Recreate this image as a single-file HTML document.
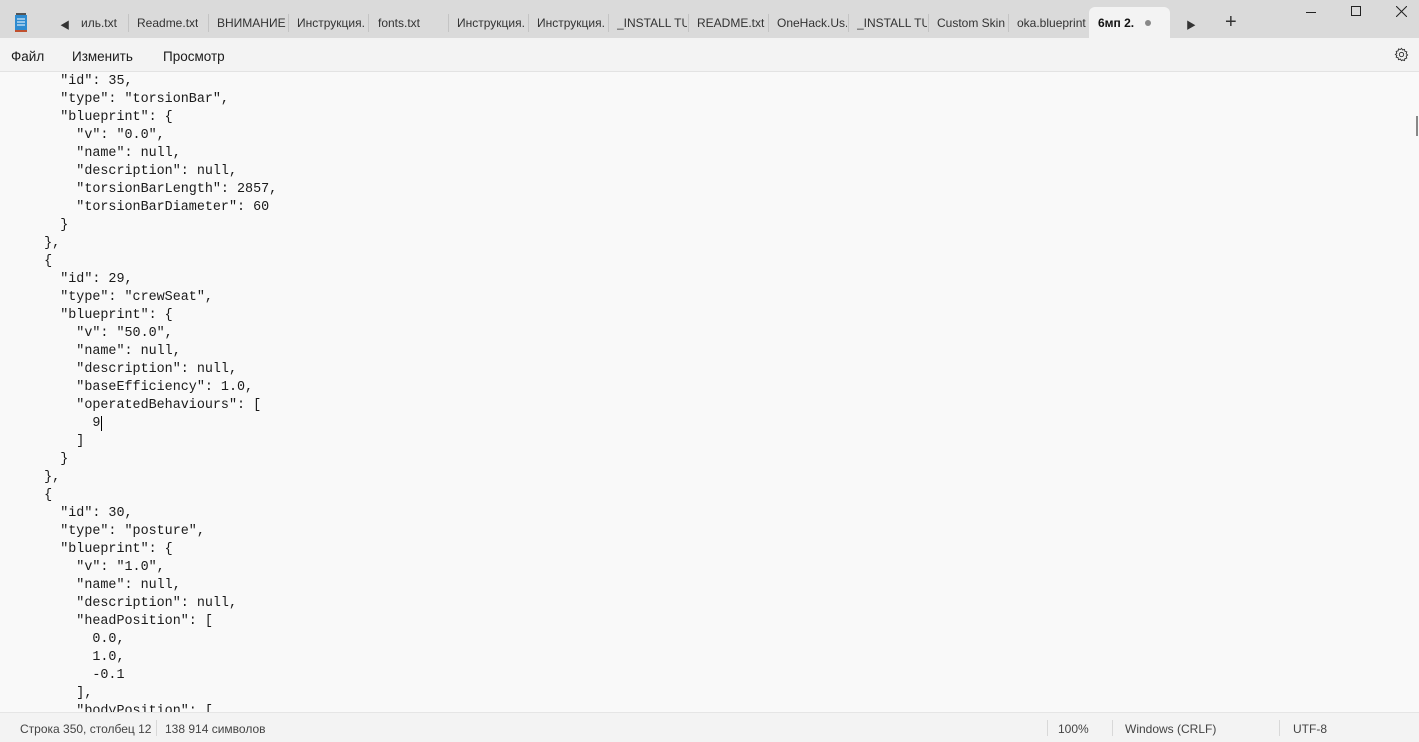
<!DOCTYPE html>
<html><head><meta charset="utf-8"><style>
*{margin:0;padding:0;box-sizing:border-box}
body{width:1419px;height:742px;overflow:hidden;background:#f9f9f9;font-family:"Liberation Sans","Noto Sans CJK SC",sans-serif;position:relative}
#tabs{position:absolute;left:0;top:0;width:1419px;height:38px;background:#dadada}
.tab{position:absolute;top:16px;font-size:12px;color:#333;white-space:nowrap;overflow:hidden}
.sep{position:absolute;top:14px;width:1px;height:18px;background:#c4c4c4}
#active{position:absolute;left:1089px;top:7px;width:81px;height:32px;background:#f3f3f3;border-radius:6px 6px 0 0}
#menu{position:absolute;left:0;top:38px;width:1419px;height:34px;background:#f3f3f3;border-bottom:1px solid #e3e3e3}
#menu span{position:absolute;top:11px;font-size:13.5px;color:#1a1a1a}
#ed{position:absolute;left:12px;top:73px;font-family:"Liberation Mono",monospace;font-size:13.4px;line-height:18px;color:#1a1a1a;white-space:pre}
#status{position:absolute;left:0;top:712px;width:1419px;height:30px;background:#f3f3f3;border-top:1px solid #e5e5e5;font-size:12px;color:#444}
#status span{position:absolute;top:9px}
#status i{position:absolute;top:7px;width:1px;height:16px;background:#d8d8d8}
</style></head><body>
<div id="tabs">
<svg style="position:absolute;left:14px;top:13px" width="14" height="19"><rect x="1" y="2" width="12" height="15" fill="#2e8bd0"/><rect x="1" y="17" width="12" height="2" fill="#c0502e"/><g stroke="#fff" stroke-width="1"><line x1="3" y1="6" x2="11" y2="6"/><line x1="3" y1="9" x2="11" y2="9"/><line x1="3" y1="12" x2="11" y2="12"/></g><rect x="2" y="0" width="10" height="2" fill="#555"/></svg>
<div class="tab" style="left:60px;top:17px;font-size:10px">◀</div>
<div class="tab" style="left:81px;width:45px">иль.txt</div><div class="sep" style="left:128px"></div>
<div class="tab" style="left:137px">Readme.txt</div><div class="sep" style="left:208px"></div>
<div class="tab" style="left:217px;width:70px">ВНИМАНИЕ</div><div class="sep" style="left:288px"></div>
<div class="tab" style="left:297px;width:70px">Инструкция.</div><div class="sep" style="left:368px"></div>
<div class="tab" style="left:378px">fonts.txt</div><div class="sep" style="left:448px"></div>
<div class="tab" style="left:457px;width:70px">Инструкция.</div><div class="sep" style="left:528px"></div>
<div class="tab" style="left:537px;width:70px">Инструкция.</div><div class="sep" style="left:608px"></div>
<div class="tab" style="left:617px;width:70px">_INSTALL TU</div><div class="sep" style="left:688px"></div>
<div class="tab" style="left:697px;width:70px">README.txt</div><div class="sep" style="left:768px"></div>
<div class="tab" style="left:777px;width:70px">OneHack.Us.</div><div class="sep" style="left:848px"></div>
<div class="tab" style="left:857px;width:70px">_INSTALL TU</div><div class="sep" style="left:928px"></div>
<div class="tab" style="left:937px;width:70px">Custom Skin</div><div class="sep" style="left:1008px"></div>
<div class="tab" style="left:1017px;width:70px">оkа.blueprint</div>
<div id="active"></div>
<div class="tab" style="left:1098px;font-weight:bold;color:#111">6мп 2.</div>
<div style="position:absolute;left:1145px;top:20px;width:6px;height:6px;border-radius:3px;background:#888"></div>
<div class="tab" style="left:1186px;top:17px;font-size:10px">▶</div>
<div class="tab" style="left:1225px;top:11px;font-size:20px;font-weight:300">+</div>
<div style="position:absolute;left:1306px;top:12px;width:10px;height:1px;background:#222"></div>
<div style="position:absolute;left:1351px;top:6px;width:10px;height:10px;border:1px solid #222"></div>
<svg style="position:absolute;left:1396px;top:6px" width="11" height="11"><path d="M0 0L11 11M11 0L0 11" stroke="#222" stroke-width="1"/></svg>
</div>
<div id="menu"><span style="left:11px">Файл</span><span style="left:72px">Изменить</span><span style="left:163px">Просмотр</span>
<svg style="position:absolute;left:1394px;top:9px" width="15" height="15" viewBox="0 0 16 16"><path d="M8 1.5l1.2 1.7 2-.6.4 2 2 .6-.6 2 1.5 1.3-1.5 1.3.6 2-2 .6-.4 2-2-.6L8 14.5l-1.2-1.6-2 .6-.4-2-2-.6.6-2L1.5 8l1.5-1.3-.6-2 2-.6.4-2 2 .6z" fill="none" stroke="#333"/><circle cx="8" cy="8" r="2.3" fill="none" stroke="#333"/></svg></div>
<div style="position:absolute;left:1416px;top:116px;width:2px;height:20px;background:#888"></div>
<div id="ed">      "id": 35,
      "type": "torsionBar",
      "blueprint": {
        "v": "0.0",
        "name": null,
        "description": null,
        "torsionBarLength": 2857,
        "torsionBarDiameter": 60
      }
    },
    {
      "id": 29,
      "type": "crewSeat",
      "blueprint": {
        "v": "50.0",
        "name": null,
        "description": null,
        "baseEfficiency": 1.0,
        "operatedBehaviours": [
          9<span style="border-left:1px solid #000;margin-left:1px"></span>
        ]
      }
    },
    {
      "id": 30,
      "type": "posture",
      "blueprint": {
        "v": "1.0",
        "name": null,
        "description": null,
        "headPosition": [
          0.0,
          1.0,
          -0.1
        ],
        "bodyPosition": [</div>
<div id="status"><span style="left:20px">Строка 350, столбец 12</span><i style="left:156px"></i><span style="left:165px">138 914 символов</span>
<i style="left:1047px"></i><span style="left:1058px">100%</span><i style="left:1112px"></i><span style="left:1125px">Windows (CRLF)</span><i style="left:1279px"></i><span style="left:1293px">UTF-8</span></div>
</body></html>
